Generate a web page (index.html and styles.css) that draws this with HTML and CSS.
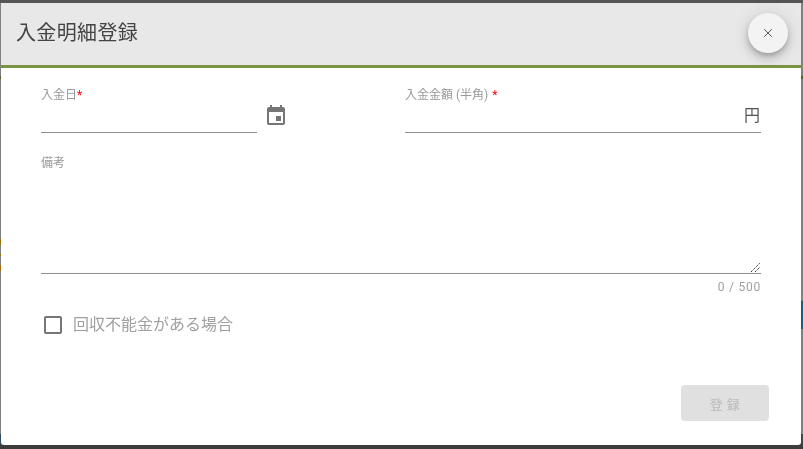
FILE: index.html
```html
<!DOCTYPE html>
<html lang="ja">
<head>
<meta charset="utf-8">
<title>入金明細登録</title>
<link rel="stylesheet" href="styles.css">
</head>
<body>
<div class="dialog">
  <header class="head">
    <h1 class="title">入金明細登録</h1>
    <button class="close" type="button" aria-label="閉じる">
      <svg width="10" height="10" viewBox="0 0 10 10"><path d="M1.2 1.2L8.8 8.8M8.8 1.2L1.2 8.8" stroke="#555" stroke-width="1" fill="none"/></svg>
    </button>
  </header>
  <div class="form">
    <div class="row">
      <div class="date-col">
        <div class="field date-field">
          <label class="label">入金日<span class="req">*</span></label>
          <div class="line"></div>
        </div>
        <svg class="cal" width="24" height="24" viewBox="0 0 24 24"><path fill="#757575" d="M17 12h-5v5h5v-5zM16 1v2H8V1H6v2H5c-1.11 0-1.99.9-1.99 2L3 19c0 1.1.89 2 2 2h14c1.1 0 2-.9 2-2V5c0-1.1-.9-2-2-2h-1V1h-2zm3 18H5V8h14v11z"/></svg>
      </div>
      <div class="field amount-field">
        <label class="label">入金金額 (半角) <span class="req req-gap">*</span></label>
        <div class="line"><span class="yen">円</span></div>
      </div>
    </div>
    <div class="note">
      <label class="label">備考</label>
      <div class="area"><svg class="grip" width="9" height="9" viewBox="0 0 9 9"><path d="M0 9L9 0M4 9L9 4" stroke="#333" stroke-width="1" stroke-dasharray="1.4 .8" fill="none"/></svg></div>
      <div class="count">0 / 500</div>
    </div>
    <div class="check">
      <span class="box"></span>
      <span class="check-text">回収不能金がある場合</span>
    </div>
    <div class="actions"><button class="submit" type="button" disabled>登 録</button></div>
  </div>
</div>
</body>
</html>
```

FILE: styles.css
```css
* { box-sizing: border-box; }
html, body { margin: 0; height: 100%; }
body {
  width: 803px;
  height: 449px;
  overflow: hidden;
  background:
    linear-gradient(to bottom,
      #555 0 3px, #808080 3px 76px, #56602f 76px 79px, #808080 79px 239px,
      #a06a10 239px 245px, #808080 245px 254px, #a06a10 254px 256px, #808080 256px 265px,
      #a06a10 265px 271px, #808080 271px 434px, #2f4a60 434px 445px, #3c3c3c 445px) left top / 1px 100% no-repeat,
    linear-gradient(to bottom,
      #555 0 3px, #808080 3px 76px, #56602f 76px 79px, #808080 79px 301px,
      #1f5a80 301px 329px, #808080 329px 434px, #444 434px 445px, #3c3c3c 445px);
  padding: 3px 2px 4px 1px;
  font-family: "Roboto", "Noto Sans CJK JP", sans-serif;
}
.dialog {
  height: 442px;
  background: #fff;
  border-radius: 0 0 3px 3px;
  display: flex;
  flex-direction: column;
}
.head {
  height: 65px;
  flex: none;
  background: #e8e8e8;
  border-bottom: 3px solid #7a9444;
  display: flex;
  align-items: center;
  justify-content: space-between;
  padding: 0 13px 2px 15px;
}
.title {
  margin: 0;
  font-size: 20px;
  letter-spacing: .35px;
  font-weight: 400;
  color: #444;
  line-height: 28px;
  will-change: transform;
}
.close {
  width: 40px;
  height: 40px;
  border: 0;
  padding: 0;
  border-radius: 50%;
  background: #f3f3f3;
  box-shadow: 0 3px 5px -1px rgba(0,0,0,.2), 0 6px 10px 0 rgba(0,0,0,.14), 0 1px 18px 0 rgba(0,0,0,.12);
  display: flex;
  align-items: center;
  justify-content: center;
}
.form {
  flex: 1;
  display: flex;
  flex-direction: column;
  padding: 19px 40px 0 40px;
  will-change: transform;
}
.row { display: flex; justify-content: space-between; }
.date-col { display: flex; width: 247px; justify-content: space-between; }
.field { display: flex; flex-direction: column; }
.date-field { width: 216px; }
.amount-field { width: 356px; }
.label {
  font-size: 12px;
  line-height: 16px;
  color: #999;
  height: 16px;
}
.req { color: #f00; }
.req-gap { margin-left: 1px; }
.line {
  height: 30px;
  border-bottom: 1px solid #8f8f8f;
  display: flex;
  justify-content: flex-end;
  align-items: flex-end;
}
.cal { margin-top: 17px; }
.yen {
  font-size: 16px;
  line-height: 20px;
  color: #555;
  margin-bottom: 6px;
  margin-right: 1px;
}
.note { margin-top: 22px; display: flex; flex-direction: column; }
.area {
  height: 103px;
  border-bottom: 1px solid #8f8f8f;
  display: flex;
  justify-content: flex-end;
  align-items: flex-end;
}
.grip { display: block; margin: 0 1px 1px 0; }
.count {
  font-size: 12px;
  line-height: 16px;
  letter-spacing: .75px;
  color: #a0a0a0;
  text-align: right;
  margin-top: 5px;
}
.check {
  display: flex;
  align-items: center;
  margin-top: 18px;
  padding-left: 3px;
  height: 24px;
}
.box {
  width: 18px;
  height: 18px;
  border: 2px solid #757575;
  border-radius: 2px;
  margin-right: 11px;
}
.check-text {
  font-size: 16px;
  line-height: 24px;
  color: #a0a0a0;
}
.actions {
  display: flex;
  justify-content: flex-end;
  margin-top: 48px;
  margin-right: -8px;
}
.submit {
  width: 88px;
  height: 36px;
  border: 0;
  border-radius: 4px;
  background: #e0e0e0;
  color: #b8b8b8;
  font: inherit;
  font-size: 13px;
  letter-spacing: .5px;
}
```
